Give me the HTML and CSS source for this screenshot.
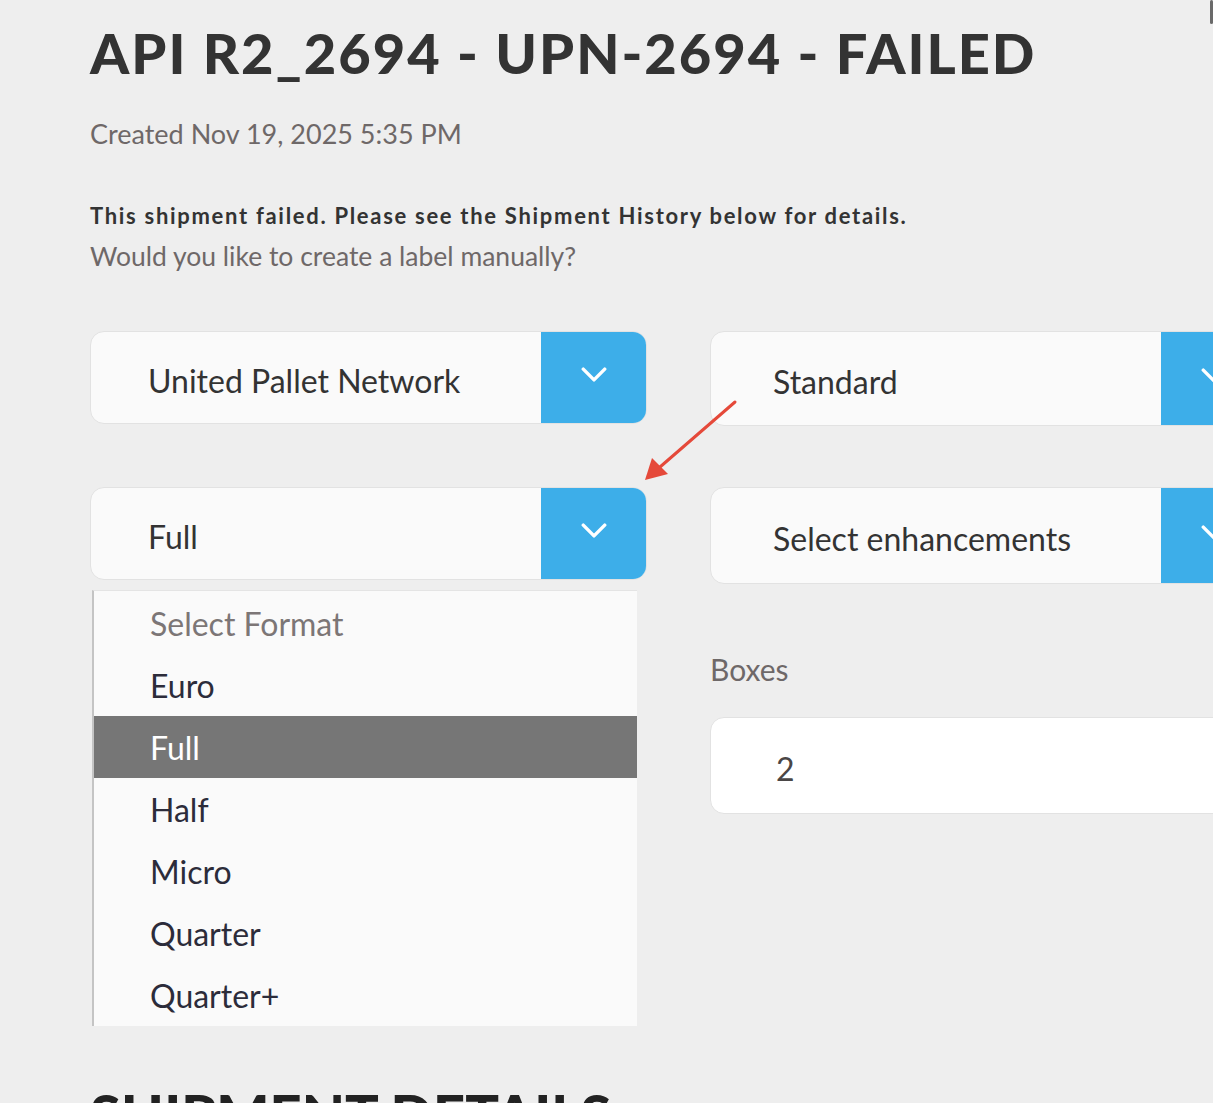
FILE: index.html
```html
<!DOCTYPE html>
<html lang="en">
<head>
<meta charset="utf-8">
<title>API R2_2694 - UPN-2694 - FAILED</title>
<link rel="stylesheet" href="styles.css">
</head>
<body>
<div class="scroll-mark"></div>
<main class="page">
  <h1 class="title">API R2_2694 - UPN-2694 - FAILED</h1>
  <p class="created">Created Nov 19, 2025 5:35 PM</p>
  <p class="alert-strong">This shipment failed. Please see the Shipment History below for details.</p>
  <p class="alert-sub">Would you like to create a label manually?</p>

  <div class="form-grid">
    <div class="select">
      <span class="select-value">United Pallet Network</span>
      <span class="select-btn"><svg viewBox="0 0 24 14" width="26" height="15"><path d="M2 2 L12 12 L22 2" fill="none" stroke="#fff" stroke-width="3.2" stroke-linecap="round" stroke-linejoin="round"/></svg></span>
    </div>
    <div class="select select-right">
      <span class="select-value">Standard</span>
      <span class="select-btn"><svg viewBox="0 0 24 14" width="26" height="15"><path d="M2 2 L12 12 L22 2" fill="none" stroke="#fff" stroke-width="3.2" stroke-linecap="round" stroke-linejoin="round"/></svg></span>
    </div>
    <div class="select">
      <span class="select-value">Full</span>
      <span class="select-btn"><svg viewBox="0 0 24 14" width="26" height="15"><path d="M2 2 L12 12 L22 2" fill="none" stroke="#fff" stroke-width="3.2" stroke-linecap="round" stroke-linejoin="round"/></svg></span>
    </div>
    <div class="select select-right select-enh">
      <span class="select-value">Select enhancements</span>
      <span class="select-btn"><svg viewBox="0 0 24 14" width="26" height="15"><path d="M2 2 L12 12 L22 2" fill="none" stroke="#fff" stroke-width="3.2" stroke-linecap="round" stroke-linejoin="round"/></svg></span>
    </div>
    <ul class="options">
      <li class="option placeholder">Select Format</li>
      <li class="option">Euro</li>
      <li class="option active">Full</li>
      <li class="option">Half</li>
      <li class="option">Micro</li>
      <li class="option">Quarter</li>
      <li class="option">Quarter+</li>
    </ul>
    <div class="boxes">
      <label class="field-label">Boxes</label>
      <div class="input">2</div>
    </div>
  </div>

  <h2 class="section">SHIPMENT DETAILS</h2>
</main>
<svg class="annot" width="1213" height="1103" viewBox="0 0 1213 1103">
  <line x1="735" y1="402" x2="660" y2="467" stroke="#e5493a" stroke-width="3" stroke-linecap="round"/>
  <polygon points="645,480 652,458 668,474" fill="#e5493a"/>
</svg>
</body>
</html>
```

FILE: styles.css
```css
html, body {
  margin: 0;
  padding: 0;
  background: #eeeeee;
  overflow: hidden;
  height: 1103px;
}
body {
  position: relative;
  font-family: "Lato", "Noto Sans", sans-serif;
  color: #333333;
}
.page {
  padding: 20px 0 0 90px;
  width: 1300px;
}
.title {
  margin: 0;
  font-size: 56px;
  font-weight: 900;
  line-height: 66px;
  color: #333333;
  letter-spacing: 2px;
}
.created {
  margin: 33px 0 0;
  font-size: 27px;
  line-height: 30px;
  color: #6e6868;
}
.alert-strong {
  margin: 54px 0 0;
  font-size: 22px;
  font-weight: 700;
  line-height: 26px;
  color: #333333;
  letter-spacing: 1.7px;
}
.alert-sub {
  margin: 12px 0 0;
  font-size: 26.5px;
  line-height: 30px;
  color: #6e6868;
}
.form-grid {
  margin-top: 60px;
  display: grid;
  grid-template-columns: 557px 557px;
  column-gap: 63px;
  grid-template-rows: 93px 93px auto;
  row-gap: 63px;
  align-items: start;
}
.select {
  display: flex;
  height: 93px;
  box-sizing: border-box;
  border: 1px solid #e2e2e2;
  border-radius: 14px;
  background: #fafafa;
  overflow: hidden;
}
.select-right { height: 95px; }
.select-value {
  flex: 1;
  display: flex;
  align-items: center;
  padding-left: 57px;
  padding-top: 5px;
  font-size: 32px;
  color: #333333;
}
.select-right .select-value { padding-left: 62px; }
.select-btn {
  width: 105px;
  background: #3daee9;
  display: flex;
  align-items: center;
  justify-content: center;
}
.select-btn svg { margin-bottom: 6px; }
.select-enh { height: 97px; }
.options {
  list-style: none;
  margin: -53px 0 0 2px;
  padding: 1px 0 0;
  width: 545px;
  background: #fafafa;
  border-left: 2px solid #c4c4c4;
  border-top: 1px solid #e4e4e4;
  box-sizing: border-box;
}
.option {
  height: 62px;
  display: flex;
  align-items: center;
  padding-left: 56px;
  font-size: 32px;
  color: #2c2c3a;
}
.option.placeholder { color: #7c7676; }
.option.active {
  background: #767676;
  color: #ffffff;
}
.boxes {
  margin-top: 9px;
}
.field-label {
  display: block;
  font-size: 30px;
  line-height: 34px;
  color: #6e6868;
}
.input {
  margin-top: 31px;
  height: 97px;
  box-sizing: border-box;
  border: 1px solid #e2e2e2;
  border-radius: 14px;
  background: #ffffff;
  display: flex;
  align-items: center;
  padding-left: 65px;
  padding-top: 6px;
  font-size: 32px;
  color: #4a4646;
}
.section {
  margin: 55px 0 0;
  font-size: 56px;
  font-weight: 900;
  line-height: 66px;
  color: #222222;
}
.annot {
  position: absolute;
  left: 0;
  top: 0;
  pointer-events: none;
}
.scroll-mark {
  position: absolute;
  right: 0;
  top: 0;
  width: 3px;
  height: 24px;
  background: #6a6a6a;
  border-radius: 2px;
}
```
